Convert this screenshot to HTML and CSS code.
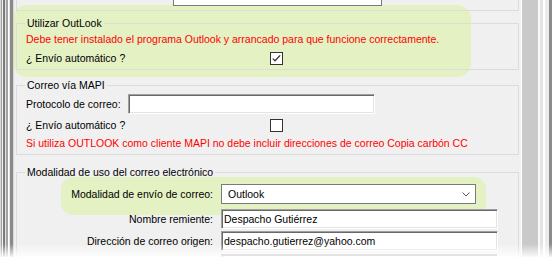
FILE: index.html
```html
<!DOCTYPE html>
<html lang="es">
<head>
<meta charset="utf-8">
<title>Correo</title>
<link rel="stylesheet" href="styles.css">
</head>
<body>
<div class="lstrip"></div>
<div class="page">
  <div class="hl hl1"></div>
  <div class="hl hl2"></div>
  <div class="prevbox"><div class="cutinput"></div></div>
  <fieldset class="grp g1">
    <legend>Utilizar OutLook</legend>
    <div class="row r-red1 red">Debe tener instalado el programa Outlook y arrancado para que funcione correctamente.</div>
    <div class="row r-chk"><span class="lbl-chk">¿ Envío automático ?</span><span class="chk"><svg width="11" height="11" viewBox="0 0 11 11"><polyline points="1.8,5.6 4,7.8 9.2,2.4" fill="none" stroke="#333" stroke-width="1.3"/></svg></span></div>
  </fieldset>
  <fieldset class="grp g2">
    <legend>Correo vía MAPI</legend>
    <div class="row r-proto"><span class="lbl-proto">Protocolo de correo:</span><span class="inp inp-proto"></span></div>
    <div class="row r-chk"><span class="lbl-chk">¿ Envío automático ?</span><span class="chk"></span></div>
    <div class="row r-red2 red">Si utiliza OUTLOOK como cliente MAPI no debe incluir direcciones de correo Copia carbón CC</div>
  </fieldset>
  <fieldset class="grp g3">
    <legend>Modalidad de uso del correo electrónico</legend>
    <div class="frow f-combo"><span class="flbl">Modalidad de envío de correo:</span><div class="combo"><span>Outlook</span><svg width="8" height="5" viewBox="0 0 8 5"><polyline points="0.5,0.5 4,4 7.5,0.5" fill="none" stroke="#5a5a5a" stroke-width="1"/></svg></div></div>
    <div class="frow f-name"><span class="flbl">Nombre remiente:</span><div class="inp inp-wide">Despacho Gutiérrez</div></div>
    <div class="frow f-mail"><span class="flbl">Dirección de correo origen:</span><div class="inp inp-wide">despacho.gutierrez@yahoo.com</div></div>
    <div class="frow f-next"><span class="flbl"></span><div class="inp inp-wide inp-cut"></div></div>
  </fieldset>
</div>
<div class="rstrip"></div>
<div class="fade"></div>
</body>
</html>
```

FILE: styles.css
```css
html, body {
  margin: 0;
  padding: 0;
}
body {
  width: 552px;
  height: 257px;
  overflow: hidden;
  display: flex;
  position: relative;
  background: #f0f0f0;
  font-family: "Liberation Sans", Arial, sans-serif;
  font-size: 10.5px;
  color: #000;
}
.lstrip {
  width: 14px;
  flex: none;
  background: linear-gradient(to right,
    #d9d9d9 0, #d9d9d9 1px,
    #9e9e9e 1px, #9e9e9e 2px,
    #f5f5f5 2px, #f5f5f5 3px,
    #7b7b7b 3px, #7b7b7b 5px,
    #e2e2e2 5px, #e2e2e2 6px,
    #a3a3a3 6px, #a3a3a3 8px,
    #ffffff 8px, #ffffff 9px,
    #e6e6e6 9px, #e6e6e6 10px,
    #8a8a8a 10px, #8a8a8a 13px,
    #d6d6d6 13px, #d6d6d6 14px);
}
.rstrip {
  width: 31px;
  flex: none;
  background: linear-gradient(to right,
    #ffffff 0, #ffffff 1px,
    #c9c9c9 1px, #c9c9c9 17px,
    #fafafa 17px, #fafafa 19px,
    #e3e3e3 19px, #e3e3e3 22px,
    #ffffff 22px, #ffffff 24px,
    #ececec 24px, #ececec 28px,
    #8c8c8c 28px, #8c8c8c 31px);
}
.page {
  width: 507px;
  height: 257px;
  overflow: hidden;
  flex: none;
  box-sizing: border-box;
  padding-left: 2px;
  background: #f0f0f0;
  position: relative;
  z-index: 0;
}
.hl {
  position: absolute;
  z-index: -1;
  background: #e4f1c3;
}
.hl1 {
  left: -1px;
  top: 5px;
  width: 458px;
  height: 72px;
  border-radius: 14px;
}
.hl2 {
  left: 47px;
  top: 177px;
  width: 425px;
  height: 38px;
  border-radius: 12px;
}
.prevbox {
  width: 501px;
  height: 10px;
  border: 1px solid #dcdcdc;
  border-top: none;
}
.cutinput {
  margin-left: 156px;
  width: 207px;
  height: 5px;
  background: #fff;
  border: 1px solid #7a7a7a;
  border-top: none;
}
.grp {
  margin: 0;
  width: 503px;
  box-sizing: border-box;
  min-width: 0;
  padding: 0 0 2px 9px;
  border: 1px solid #dcdcdc;
}
.grp legend {
  padding: 0 2px;
  margin-left: -1px;
  line-height: 14px;
  height: 14px;
}
.g1 { margin-top: 5px; }
.g2 { margin-top: 8px; }
.g3 {
  margin-top: 10px;
  padding-bottom: 0;
  border-bottom: none;
}
.row {
  display: flex;
  align-items: center;
  line-height: 13px;
  white-space: nowrap;
}
.red { color: #ff0000; }
.r-red1 { height: 19px; }
.r-chk { height: 18px; }
.r-proto { height: 24px; }
.r-red2 { height: 18px; }
.lbl-chk {
  width: 244px;
  flex: none;
}
.lbl-proto {
  width: 102px;
  flex: none;
}
.chk {
  width: 13px;
  height: 13px;
  box-sizing: border-box;
  border: 1px solid #333;
  background: #fff;
  display: flex;
  flex: none;
}
.inp {
  box-sizing: border-box;
  height: 20px;
  background: #fff;
  border-top: 1px solid #a0a0a0;
  border-left: 1px solid #a0a0a0;
  border-right: 1px solid #ffffff;
  border-bottom: 1px solid #ffffff;
  box-shadow: inset 1px 1px 0 #696969, inset -1px -1px 0 #e3e3e3;
  padding-left: 2px;
  display: flex;
  align-items: center;
  line-height: 13px;
  white-space: nowrap;
}
.inp-proto { width: 247px; }
.inp-wide { width: 277px; flex: none; }
.inp-cut {
  height: 3px;
  border-bottom: none;
  box-shadow: inset 1px 1px 0 #696969;
}
.frow {
  display: flex;
  align-items: center;
  height: 20px;
}
.f-combo { margin-top: 5px; }
.f-name { margin-top: 5px; }
.f-mail { margin-top: 2px; }
.f-next {
  margin-top: 3px;
  height: 3px;
  align-items: flex-start;
}
.flbl {
  width: 187px;
  margin-right: 8px;
  text-align: right;
  flex: none;
  white-space: nowrap;
}
.combo {
  box-sizing: border-box;
  width: 255px;
  height: 20px;
  background: #fff;
  border: 1px solid #7a7a7a;
  display: flex;
  align-items: center;
  justify-content: space-between;
  padding: 0 5px 0 6px;
}
.fade {
  position: absolute;
  left: 0;
  right: 0;
  bottom: 0;
  height: 13px;
  background: linear-gradient(to bottom, rgba(255,255,255,0), rgba(255,255,255,0.9));
  z-index: 5;
}
```
